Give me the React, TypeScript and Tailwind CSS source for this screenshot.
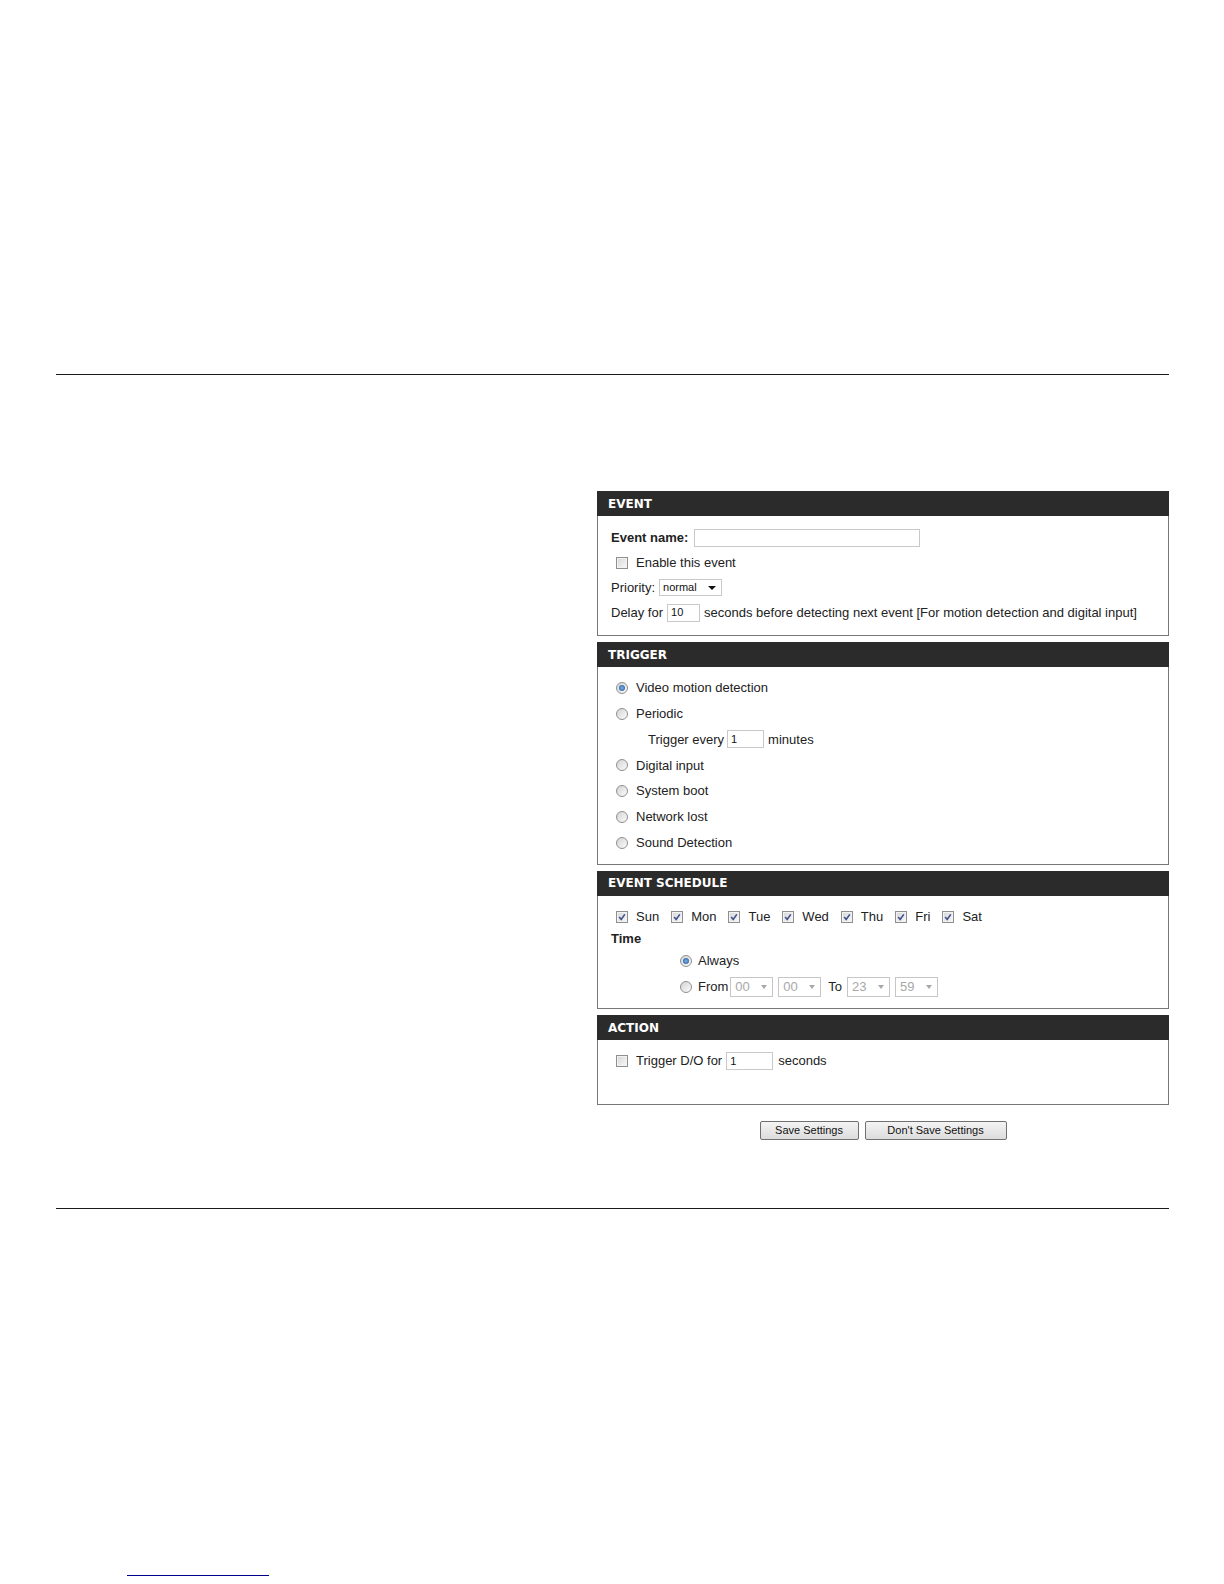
const body = "font-['Liberation_Sans',Arial,sans-serif] text-[13px] text-[#222]";

function Check({ checked }: { checked?: boolean }) {
  return (
    <span className="relative inline-block h-[12px] w-[12px] shrink-0 border border-[#8e8f8f] bg-linear-to-br from-[#d6d6d6] to-[#fafafa] shadow-[inset_0_0_0_1px_#f2f2f2]">
      {checked && (
        <svg className="absolute inset-0" width="10" height="10" viewBox="0 0 10 10">
          <path d="M2.2 5 L4.2 7.4 L7.8 2.4" fill="none" stroke="#3d4f8c" strokeWidth="1.6" />
        </svg>
      )}
    </span>
  );
}

function Radio({ checked }: { checked?: boolean }) {
  return (
    <span className="relative inline-flex h-[12px] w-[12px] shrink-0 items-center justify-center rounded-full border border-[#8e8f8f] bg-linear-to-br from-[#d4d4d4] to-[#fbfbfb]">
      {checked && (
        <span className="h-[6px] w-[6px] rounded-full bg-radial from-[#7db3ea] to-[#1e4f8f]" />
      )}
    </span>
  );
}

function TextBox({ value, w }: { value?: string; w: string }) {
  return (
    <span className={`inline-flex h-[18px] shrink-0 items-center border border-[#c9c9c9] bg-white px-[3px] text-[11px] text-[#111] ${w}`}>
      {value}
    </span>
  );
}

function Header({ title }: { title: string }) {
  return (
    <div className="flex h-[25px] items-center bg-[#2b2b2b] pl-[11px] font-['DejaVu_Sans',Verdana,sans-serif] text-[12px] font-bold text-white">
      {title}
    </div>
  );
}

function TimeSelect({ value }: { value: string }) {
  return (
    <span className="inline-flex h-[20px] w-[43px] shrink-0 items-center justify-between border border-[#c6c6c6] bg-white pl-[4px] pr-[5px] text-[13px] text-[#a8a8a8]">
      {value}
      <svg width="6" height="4" viewBox="0 0 6 4">
        <path d="M0 0 H6 L3 4 Z" fill="#a8a8a8" />
      </svg>
    </span>
  );
}

const days = ["Sun", "Mon", "Tue", "Wed", "Thu", "Fri", "Sat"];
const triggers = ["Video motion detection", "Periodic", "Digital input", "System boot", "Network lost", "Sound Detection"];

export default function App() {
  return (
    <div className={`w-full bg-white pb-[8px] ${body}`}>
      <div className="ml-[56px] w-[1113px] pt-[374px]">
        <div className="h-px bg-[#1a1a1a]" />

        <div className="ml-[541px] mt-[116px] w-[572px]">
          {/* Event */}
          <Header title="EVENT" />
          <div className="border border-t-0 border-[#777] pb-[10px] pl-[13px] pr-[8px] pt-[9px]">
            <div className="flex h-[25px] items-center gap-[6px]">
              <span className="font-bold">Event name:</span>
              <TextBox w="w-[226px]" />
            </div>
            <div className="flex h-[25px] items-center gap-[8px] pl-[5px]">
              <Check />
              <span>Enable this event</span>
            </div>
            <div className="flex h-[25px] items-center gap-[4px]">
              <span>Priority:</span>
              <span className="inline-flex h-[17px] w-[63px] items-center justify-between border border-[#c9c9c9] bg-white pl-[3px] pr-[5px] text-[11px] text-[#111]">
                normal
                <svg width="8" height="4" viewBox="0 0 8 4">
                  <path d="M0 0 H8 L4 4 Z" fill="#111" />
                </svg>
              </span>
            </div>
            <div className="flex h-[25px] items-center">
              <span>Delay for</span>
              <span className="ml-[4px] mr-[4px] flex">
                <TextBox value="10" w="w-[33px]" />
              </span>
              <span className="whitespace-nowrap">seconds before detecting next event [For motion detection and digital input]</span>
            </div>
          </div>

          {/* Trigger */}
          <div className="mt-[6px]">
            <Header title="TRIGGER" />
            <div className="border border-t-0 border-[#777] px-[8px] pb-[8px] pt-[8px]">
              {triggers.map((t, i) => (
                <div key={t}>
                  <div className="flex h-[25.8px] items-center gap-[8px] pl-[10px]">
                    <Radio checked={i === 0} />
                    <span>{t}</span>
                  </div>
                  {t === "Periodic" && (
                    <div className="flex h-[25.8px] items-center gap-[3px] pl-[42px]">
                      <span>Trigger every</span>
                      <TextBox value="1" w="w-[37px]" />
                      <span className="ml-[1px]">minutes</span>
                    </div>
                  )}
                </div>
              ))}
            </div>
          </div>

          {/* Event schedule */}
          <div className="mt-[6px]">
            <Header title="EVENT SCHEDULE" />
            <div className="border border-t-0 border-[#777] px-[8px] pb-[7.5px] pt-[9px]">
              <div className="flex h-[24px] items-center gap-[12px] pl-[10px]">
                {days.map((d) => (
                  <span key={d} className="flex items-center gap-[8px]">
                    <Check checked />
                    <span>{d}</span>
                  </span>
                ))}
              </div>
              <div className="flex h-[20px] items-center pl-[5px] font-bold">Time</div>
              <div className="flex h-[25px] items-center gap-[6px] pl-[74px]">
                <Radio checked />
                <span>Always</span>
              </div>
              <div className="flex h-[27px] items-center pl-[74px]">
                <Radio />
                <span className="ml-[6px] mr-[2px]">From</span>
                <TimeSelect value="00" />
                <span className="ml-[5px]">
                  <TimeSelect value="00" />
                </span>
                <span className="ml-[7px] mr-[5px]">To</span>
                <TimeSelect value="23" />
                <span className="ml-[5px]">
                  <TimeSelect value="59" />
                </span>
              </div>
            </div>
          </div>

          {/* Action */}
          <div className="mt-[6px]">
            <Header title="ACTION" />
            <div className="border border-t-0 border-[#777] px-[8px] pb-[31px] pt-[9px]">
              <div className="flex h-[24px] items-center pl-[10px]">
                <Check />
                <span className="ml-[8px] mr-[4px]">Trigger D/O for</span>
                <TextBox value="1" w="w-[47px]" />
                <span className="ml-[5px]">seconds</span>
              </div>
            </div>
          </div>

          <div className="mt-[16px] flex justify-center gap-[6px]">
            <button className="h-[19px] w-[99px] rounded-[2px] border border-[#707070] bg-linear-to-b from-[#f4f4f4] to-[#dcdcdc] text-[11px] text-[#111]">
              Save Settings
            </button>
            <button className="h-[19px] w-[142px] rounded-[2px] border border-[#707070] bg-linear-to-b from-[#f4f4f4] to-[#dcdcdc] text-[11px] text-[#111]">
              Don't Save Settings
            </button>
          </div>
        </div>

        <div className="mt-[68px] h-px bg-[#1a1a1a]" />
      </div>

      <div className="ml-[127px] mt-[366px] h-px w-[142px] bg-[#00008b]" />
    </div>
  );
}
